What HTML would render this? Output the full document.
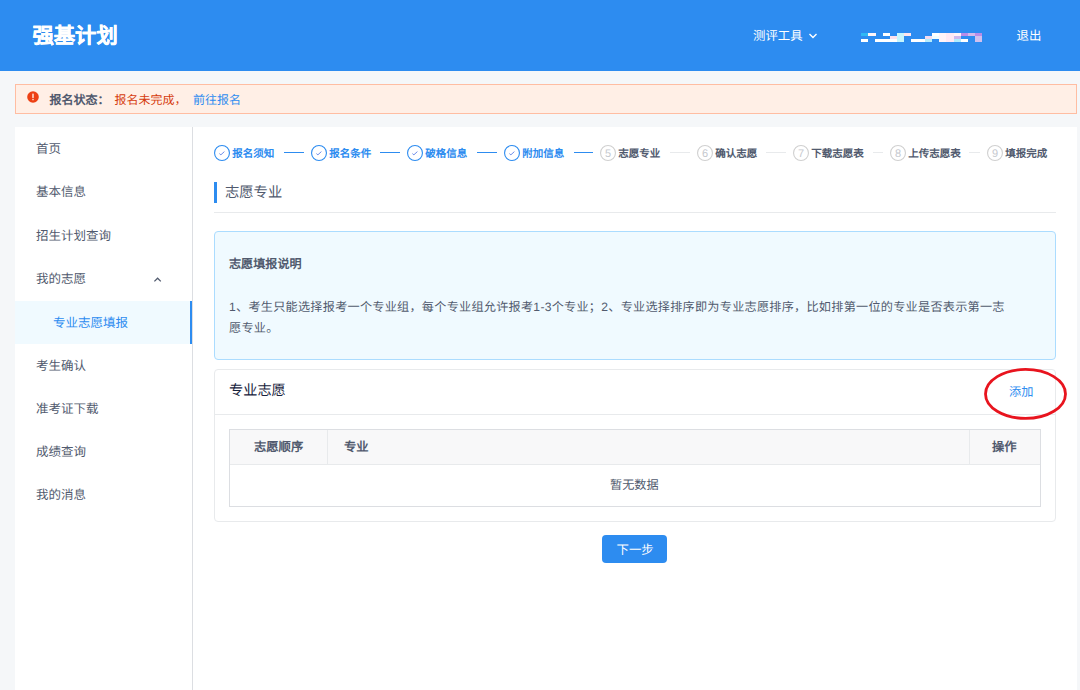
<!DOCTYPE html>
<html lang="zh-CN">
<head>
<meta charset="utf-8">
<style>
*{margin:0;padding:0;box-sizing:border-box}
html,body{width:1080px;height:690px;overflow:hidden}
body{text-rendering:geometricPrecision;background:#f5f7f9;font-family:"Liberation Sans",sans-serif;color:#515a6e;position:relative}
.a{position:absolute;white-space:nowrap}
.t{position:absolute;white-space:nowrap;line-height:1;font-size:12px}
#hdr{left:0;top:0;width:1080px;height:70.5px;background:#2d8cf0}
#alert{left:15px;top:84px;width:1062px;height:30px;background:#ffefe6;border:1px solid #ffbda2}
#side{left:15px;top:127px;width:178px;height:563px;background:#fff;border-right:1px solid #dcdee2}
#main{left:193px;top:127px;width:884px;height:563px;background:#fff}
.mi{color:#515a6e}
.step-c{position:absolute;width:16px;height:16px;border-radius:50%;top:145px}
.fin{border:1px solid #2d8cf0}
.wait{border:1px solid #cccccc;color:#c5c8ce;font-size:11px;line-height:14px;text-align:center}
.st{position:absolute;top:148.6px;font-size:10.5px;line-height:1;font-weight:bold;white-space:nowrap}
.sf{color:#2d8cf0}
.sw{color:#515a6e}
.ln{position:absolute;top:152px;height:1px}
.lf{background:#2d8cf0}
.lw{background:#e8eaec}
.mz{position:absolute;width:7.25px;height:3.3px}
</style>
</head>
<body>
<div id="hdr" class="a"></div>
<div class="t" style="left:32.5px;top:26px;font-size:21.3px;font-weight:bold;color:#fff;-webkit-text-stroke:0.3px #fff">强基计划</div>
<div class="t" style="left:753px;top:29.7px;font-size:12.4px;color:#fff">测评工具</div>
<svg class="a" style="left:808px;top:31.8px" width="10" height="8" viewBox="0 0 10 8"><path d="M1.5 2 L5 5.5 L8.5 2" fill="none" stroke="#fff" stroke-width="1.4"/></svg>
<div id="mosaic">
<div class="mz" style="left:861.20px;top:32.90px;background:#2fb8f4"></div>
<div class="mz" style="left:868.30px;top:32.90px;background:#fff6f8"></div>
<div class="mz" style="left:882.50px;top:32.90px;background:#ffffff"></div>
<div class="mz" style="left:896.70px;top:32.90px;background:#c6f5fd"></div>
<div class="mz" style="left:903.80px;top:32.90px;background:#ffe4ee"></div>
<div class="mz" style="left:932.20px;top:32.90px;background:#ffffff"></div>
<div class="mz" style="left:939.30px;top:32.90px;background:#fff4f8"></div>
<div class="mz" style="left:946.40px;top:32.90px;background:#ffe9f4"></div>
<div class="mz" style="left:953.50px;top:32.90px;background:#fff4f8"></div>
<div class="mz" style="left:960.60px;top:32.90px;background:#b88ce8"></div>
<div class="mz" style="left:967.70px;top:32.90px;background:#d2b9ec"></div>
<div class="mz" style="left:974.80px;top:32.90px;background:#b88ce8"></div>
<div class="mz" style="left:889.60px;top:36.05px;background:#fde2ee"></div>
<div class="mz" style="left:896.70px;top:36.05px;background:#c6f5fd"></div>
<div class="mz" style="left:925.10px;top:36.05px;background:#f3dbef"></div>
<div class="mz" style="left:932.20px;top:36.05px;background:#effdff"></div>
<div class="mz" style="left:939.30px;top:36.05px;background:#fff4f8"></div>
<div class="mz" style="left:946.40px;top:36.05px;background:#ffe9f4"></div>
<div class="mz" style="left:953.50px;top:36.05px;background:#cdb8ee"></div>
<div class="mz" style="left:974.80px;top:36.05px;background:#d0c0ee"></div>
<div class="mz" style="left:861.20px;top:39.20px;background:#ffffff"></div>
<div class="mz" style="left:875.40px;top:39.20px;background:#ffffff"></div>
<div class="mz" style="left:882.50px;top:39.20px;background:#ffffff"></div>
<div class="mz" style="left:889.60px;top:39.20px;background:#ffffff"></div>
<div class="mz" style="left:896.70px;top:39.20px;background:#c6f5fd"></div>
<div class="mz" style="left:910.90px;top:39.20px;background:#ffffff"></div>
<div class="mz" style="left:918.00px;top:39.20px;background:#ffffff"></div>
<div class="mz" style="left:925.10px;top:39.20px;background:#b5ecfc"></div>
<div class="mz" style="left:939.30px;top:39.20px;background:#fff4f8"></div>
<div class="mz" style="left:946.40px;top:39.20px;background:#ffe9f4"></div>
<div class="mz" style="left:953.50px;top:39.20px;background:#b0ecfc"></div>
<div class="mz" style="left:960.60px;top:39.20px;background:#ffffff"></div>
<div class="mz" style="left:974.80px;top:39.20px;background:#d0c0ee"></div>
</div>
<div class="t" style="left:1016.5px;top:30px;font-size:12.4px;color:#fff">退出</div>

<div id="alert" class="a"></div>
<svg class="a" style="left:27px;top:91px" width="12" height="12" viewBox="0 0 12 12"><circle cx="6" cy="6" r="5.8" fill="#ed4014"/><rect x="5.3" y="2.6" width="1.4" height="4.4" fill="#ffefe6" rx="0.5"/><rect x="5.3" y="7.8" width="1.4" height="1.5" fill="#ffefe6" rx="0.5"/></svg>
<div class="t" style="left:49.5px;top:94px;font-size:12px;font-weight:bold;color:#515a6e">报名状态：</div>
<div class="t" style="left:114.5px;top:94px;font-size:12px;color:#d63c0e">报名未完成，</div>
<div class="t" style="left:193px;top:94px;font-size:12px;color:#2d8cf0">前往报名</div>

<div id="side" class="a"></div>
<div id="main" class="a"></div>
<div class="a" style="left:15px;top:300.5px;width:177px;height:43px;background:#f0faff;border-right:2px solid #2d8cf0"></div>
<div class="t mi" style="left:36px;top:142.7px;font-size:12.5px">首页</div>
<div class="t mi" style="left:36px;top:186.2px;font-size:12.5px">基本信息</div>
<div class="t mi" style="left:36px;top:229.7px;font-size:12.5px">招生计划查询</div>
<div class="t mi" style="left:36px;top:273.2px;font-size:12.5px">我的志愿</div>
<svg class="a" style="left:152px;top:275px" width="10" height="8" viewBox="0 0 10 8"><path d="M2.4 6.4 L5.6 3.2 L8.8 6.4" fill="none" stroke="#515a6e" stroke-width="1.25"/></svg>
<div class="t" style="left:53px;top:316.7px;font-size:12.5px;color:#2d8cf0">专业志愿填报</div>
<div class="t mi" style="left:36px;top:360px;font-size:12.5px">考生确认</div>
<div class="t mi" style="left:36px;top:403.1px;font-size:12.5px">准考证下载</div>
<div class="t mi" style="left:36px;top:446.2px;font-size:12.5px">成绩查询</div>
<div class="t mi" style="left:36px;top:489.4px;font-size:12.5px">我的消息</div>

<div id="steps">
<svg class="a" style="left:214.0px;top:145px" width="16" height="16" viewBox="0 0 16 16"><circle cx="8" cy="8" r="7.45" fill="none" stroke="#2d8cf0" stroke-width="1.1"/><path d="M5.4 8.6 L6.9 9.8 L10.4 6.6" fill="none" stroke="#5c7fe6" stroke-width="0.9"/></svg>
<div class="st sf" style="left:232.3px">报名须知</div>
<div class="ln lf" style="left:283.5px;width:20.2px"></div>
<svg class="a" style="left:311.0px;top:145px" width="16" height="16" viewBox="0 0 16 16"><circle cx="8" cy="8" r="7.45" fill="none" stroke="#2d8cf0" stroke-width="1.1"/><path d="M5.4 8.6 L6.9 9.8 L10.4 6.6" fill="none" stroke="#5c7fe6" stroke-width="0.9"/></svg>
<div class="st sf" style="left:329.3px">报名条件</div>
<div class="ln lf" style="left:380.0px;width:19.7px"></div>
<svg class="a" style="left:407.0px;top:145px" width="16" height="16" viewBox="0 0 16 16"><circle cx="8" cy="8" r="7.45" fill="none" stroke="#2d8cf0" stroke-width="1.1"/><path d="M5.4 8.6 L6.9 9.8 L10.4 6.6" fill="none" stroke="#5c7fe6" stroke-width="0.9"/></svg>
<div class="st sf" style="left:425.3px">破格信息</div>
<div class="ln lf" style="left:476.5px;width:20.2px"></div>
<svg class="a" style="left:504.0px;top:145px" width="16" height="16" viewBox="0 0 16 16"><circle cx="8" cy="8" r="7.45" fill="none" stroke="#2d8cf0" stroke-width="1.1"/><path d="M5.4 8.6 L6.9 9.8 L10.4 6.6" fill="none" stroke="#5c7fe6" stroke-width="0.9"/></svg>
<div class="st sf" style="left:522.3px">附加信息</div>
<div class="ln lf" style="left:573.6px;width:19.1px"></div>
<svg class="a" style="left:600.0px;top:145px" width="16" height="16" viewBox="0 0 16 16"><circle cx="8" cy="8" r="7.45" fill="none" stroke="#d0d0d0" stroke-width="1.1"/></svg><div class="t" style="left:600.0px;top:148.7px;width:16px;text-align:center;font-size:11px;color:#c5c8ce">5</div>
<div class="st sw" style="left:618.3px">志愿专业</div>
<div class="ln lw" style="left:669.5px;width:20.2px"></div>
<svg class="a" style="left:697.0px;top:145px" width="16" height="16" viewBox="0 0 16 16"><circle cx="8" cy="8" r="7.45" fill="none" stroke="#d0d0d0" stroke-width="1.1"/></svg><div class="t" style="left:697.0px;top:148.7px;width:16px;text-align:center;font-size:11px;color:#c5c8ce">6</div>
<div class="st sw" style="left:715.3px">确认志愿</div>
<div class="ln lw" style="left:766.0px;width:19.7px"></div>
<svg class="a" style="left:793.0px;top:145px" width="16" height="16" viewBox="0 0 16 16"><circle cx="8" cy="8" r="7.45" fill="none" stroke="#d0d0d0" stroke-width="1.1"/></svg><div class="t" style="left:793.0px;top:148.7px;width:16px;text-align:center;font-size:11px;color:#c5c8ce">7</div>
<div class="st sw" style="left:811.3px">下载志愿表</div>
<div class="ln lw" style="left:873.0px;width:9.7px"></div>
<svg class="a" style="left:890.0px;top:145px" width="16" height="16" viewBox="0 0 16 16"><circle cx="8" cy="8" r="7.45" fill="none" stroke="#d0d0d0" stroke-width="1.1"/></svg><div class="t" style="left:890.0px;top:148.7px;width:16px;text-align:center;font-size:11px;color:#c5c8ce">8</div>
<div class="st sw" style="left:908.3px">上传志愿表</div>
<div class="ln lw" style="left:969.4px;width:10.3px"></div>
<svg class="a" style="left:987.0px;top:145px" width="16" height="16" viewBox="0 0 16 16"><circle cx="8" cy="8" r="7.45" fill="none" stroke="#d0d0d0" stroke-width="1.1"/></svg><div class="t" style="left:987.0px;top:148.7px;width:16px;text-align:center;font-size:11px;color:#c5c8ce">9</div>
<div class="st sw" style="left:1005.3px">填报完成</div>
</div>

<div class="a" style="left:214px;top:182px;width:3px;height:21.3px;background:#2d8cf0"></div>
<div class="t" style="left:225px;top:185.7px;font-size:14.3px;color:#515a6e">志愿专业</div>
<div class="a" style="left:214px;top:212px;width:842px;height:1px;background:#e8eaec"></div>

<div class="a" style="left:214px;top:231px;width:842px;height:129px;background:#f0faff;border:1px solid #abdcff;border-radius:4px"></div>
<div class="t" style="left:229px;top:257.7px;font-size:12.1px;font-weight:bold;color:#515a6e">志愿填报说明</div>
<div class="a" style="left:229px;top:296.8px;width:800px;font-size:12.15px;letter-spacing:0.25px;line-height:21.2px;color:#515a6e;white-space:normal">1、考生只能选择报考一个专业组，每个专业组允许报考1-3个专业；2、专业选择排序即为专业志愿排序，比如排第一位的专业是否表示第一志<br>愿专业。</div>

<div class="a" style="left:214px;top:369px;width:842px;height:153px;background:#fff;border:1px solid #e8eaec;border-radius:4px"></div>
<div class="a" style="left:215px;top:414px;width:840px;height:1px;background:#e8eaec"></div>
<div class="t" style="left:229px;top:384px;font-size:14.2px;color:#17233d">专业志愿</div>
<div class="t" style="left:1009px;top:385.5px;font-size:12.2px;color:#2d8cf0">添加</div>

<div class="a" style="left:229px;top:429px;width:812px;height:78px;border:1px solid #dcdee2;background:#fff"></div>
<div class="a" style="left:230px;top:430px;width:810px;height:35px;background:#f8f8f9;border-bottom:1px solid #e8eaec"></div>
<div class="a" style="left:327px;top:430px;width:1px;height:34px;background:#e8eaec"></div>
<div class="a" style="left:969px;top:430px;width:1px;height:34px;background:#e8eaec"></div>
<div class="t" style="left:254px;top:441.3px;font-size:12.3px;font-weight:bold;color:#515a6e">志愿顺序</div>
<div class="t" style="left:344px;top:441.3px;font-size:12.3px;font-weight:bold;color:#515a6e">专业</div>
<div class="t" style="left:992px;top:441.3px;font-size:12.3px;font-weight:bold;color:#515a6e">操作</div>
<div class="t" style="left:610px;top:479px;font-size:12.2px;color:#515a6e">暂无数据</div>

<div class="a" style="left:602px;top:535px;width:65px;height:28.2px;background:#2d8cf0;border-radius:4px"></div>
<div class="t" style="left:616.5px;top:543.5px;font-size:12.4px;color:#fff">下一步</div>

<svg class="a" style="left:0;top:0" width="1080" height="690"><ellipse cx="1025.5" cy="393.9" rx="40" ry="24.5" fill="none" stroke="#e8141e" stroke-width="2.8"/></svg>
</body>
</html>
